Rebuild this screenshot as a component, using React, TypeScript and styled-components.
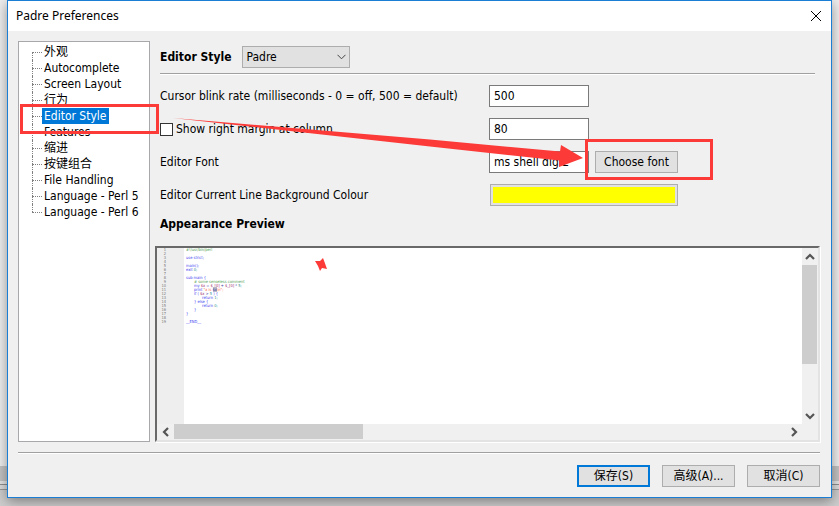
import React, { useState } from 'react';
import styled, { createGlobalStyle, css } from 'styled-components';

const GlobalStyle = createGlobalStyle`
  *, *::before, *::after { box-sizing: border-box; }
  body { margin: 0; background: #c8c8c8; color: #000; }
  body, button, input, select {
    font-family: "DejaVu Sans Condensed", "Noto Sans CJK SC", sans-serif;
    font-size: 12px;
    line-height: 16px;
  }
`;

const Desktop = styled.div`
  position: relative;
  display: flow-root;
  min-height: 100vh;
  overflow: hidden;
  background: linear-gradient(
    #eeeeee 0 466px, #c3c3c3 466px 481px, #e4e4e4 481px 484px,
    #8f8f8f 484px 485px, #dcdcdc 485px 489px, #999999 489px 490px, #cdcdcd 490px
  );
`;

const Dialog = styled.section`
  margin: 0 7px 7px;
  border: 1px solid #1a7fd4;
  background: #f0f0f0;
  box-shadow: 0 3px 12px rgba(0, 0, 0, 0.4);
`;

const TitleBar = styled.header`
  display: flex;
  align-items: center;
  justify-content: space-between;
  height: 30px;
  padding: 0 10px 0 8px;
  background: #fff;
`;

const Title = styled.h1`
  margin: 0;
  font-family: "Noto Sans", sans-serif;
  font-size: 12px;
  font-weight: 400;
`;

const CloseButton = styled.button`
  display: flex;
  padding: 0;
  border: 0;
  background: none;
`;

const Content = styled.div`
  display: flex;
  gap: 5px;
  padding: 10px 11px 10px 10px;
`;

const Tree = styled.ul`
  flex: 0 0 132px;
  margin: 0;
  padding: 2px 0 0 13px;
  border: 1px solid #a8a8ac;
  background: #fff;
  list-style: none;
`;

const TreeItem = styled.li`
  position: relative;
  display: flex;
  align-items: center;
  height: 16px;

  &::before {
    content: '';
    width: 10px;
    border-top: 1px dotted #808080;
  }
  &::after {
    content: '';
    position: absolute;
    left: 0;
    top: 0;
    height: 16px;
    border-left: 1px dotted #808080;
  }
  &:first-child::after { top: 8px; height: 8px; }
  &:last-child::after { height: 8px; }
`;

const TreeLabel = styled.button<{ $selected: boolean }>`
  padding: 0 2px;
  border: 0;
  background: none;
  color: #000;
  height: 16px;
  white-space: nowrap;
  ${(p) => p.$selected && css`
    background: #0078d7;
    color: #fff;
  `}
`;

const Panel = styled.main`
  flex: 1;
  min-width: 0;
`;

const StyleRow = styled.div`
  display: flex;
  align-items: center;
  gap: 11px;
  margin: 0 5px;
  padding: 5px 0;
`;

const StrongLabel = styled.label`
  font-weight: 700;
`;

const SelectBox = styled.div`
  display: grid;
  align-items: center;
  width: 108px;

  > * { grid-area: 1 / 1; }
  > svg { justify-self: end; margin-right: 4px; pointer-events: none; }
`;

const Select = styled.select`
  width: 100%;
  height: 22px;
  padding: 0 3px;
  border: 1px solid #adadad;
  border-radius: 0;
  background: #e1e1e1;
  color: #000;
  appearance: none;
`;

const Rule = styled.hr`
  height: 2px;
  margin: 0 5px;
  border: 0;
  border-top: 1px solid #a0a0a0;
  border-bottom: 1px solid #fff;
`;

const Settings = styled.div`
  display: grid;
  grid-template-columns: 319px auto 1fr;
  grid-template-rows: 22px 22px 22px 22px;
  row-gap: 11px;
  column-gap: 10px;
  align-items: center;
  padding: 10px 5px;
`;

const CheckLabel = styled.label`
  display: flex;
  align-items: center;
  gap: 3px;
`;

const Checkbox = styled.input`
  width: 13px;
  height: 13px;
  margin: 0;
  border: 1px solid #333;
  background: #fff;
  appearance: none;
  &:checked { background: #0078d7; }
`;

const TextInput = styled.input`
  width: 100px;
  height: 22px;
  padding: 0 4px;
  border: 1px solid #7a7a7a;
  border-radius: 0;
  background: #fff;
  color: #000;
`;

const Button = styled.button<{ $primary?: boolean; $width: number }>`
  width: ${(p) => p.$width}px;
  height: 22px;
  padding: 0;
  border: ${(p) => (p.$primary ? '2px solid #0078d7' : '1px solid #adadad')};
  background: #e1e1e1;
  color: #000;
`;

const FontButton = styled(Button)`
  margin-left: -4px;
`;

const ColourButton = styled.button`
  grid-column: 2 / 4;
  width: 188px;
  height: 22px;
  margin-left: 1px;
  border: 1px solid #adadad;
  padding: 2px;
  background: #e1e1e1;
`;

const ColourFill = styled.span`
  display: block;
  height: 16px;
  background: #ffff00;
`;

const SectionTitle = styled.h2`
  margin: 0 5px 14px;
  font-size: 12px;
  line-height: 16px;
  font-weight: 700;
`;

const Preview = styled.div`
  display: grid;
  grid-template-columns: 1fr 16px;
  grid-template-rows: 176px 16px;
  border: 2px solid;
  border-color: #696969 #e3e3e3 #e3e3e3 #696969;
  box-shadow: 1px 1px 0 #fff;
  background: #f0f0f0;
`;

const Editor = styled.div`
  display: flex;
  overflow: hidden;
  background: #fff;
  font-family: "DejaVu Sans Condensed", sans-serif;
  font-size: 4px;
  line-height: 4px;
`;

const Gutter = styled.ol`
  width: 27px;
  margin: 0;
  padding: 0 18px 0 0;
  background: #eee;
  color: #777;
  list-style: none;
  text-align: right;
`;

const Code = styled.pre`
  margin: 0;
  padding: 0 0 0 2px;
  font-family: inherit;
`;

const CodeLine = styled.div<{ $indent: number }>`
  height: 4px;
  padding-left: ${(p) => p.$indent * 8}px;
`;

const tones = {
  comment: '#4fa04f',
  keyword: '#3c3cf0',
  scalar: '#a03070',
  string: '#ff6040',
  number: '#309090',
  plain: '#4040a0',
};
type Tone = keyof typeof tones;

const Token = styled.span<{ $tone: Tone; $marked?: boolean }>`
  color: ${(p) => tones[p.$tone]};
  background: ${(p) => (p.$marked ? '#b8b8c8' : 'transparent')};
`;

const VScroll = styled.div`
  display: flex;
  flex-direction: column;
  width: 15px;
`;

const HScroll = styled.div`
  display: flex;
  height: 15px;
`;

const ScrollButton = styled.button`
  display: flex;
  align-items: center;
  justify-content: center;
  flex: 0 0 17px;
  min-height: 15px;
  padding: 0;
  border: 0;
  background: #f0f0f0;
`;

const Track = styled.div`
  display: flex;
  flex: 1;
`;

const VThumb = styled.div`
  width: 15px;
  height: 70%;
  background: #cdcdcd;
`;

const HThumb = styled.div`
  width: 31%;
  background: #cdcdcd;
`;

const Footer = styled.footer`
  padding: 0 11px 10px 10px;
`;

const FooterRule = styled(Rule)`
  margin: 0;
`;

const Actions = styled.div`
  display: flex;
  justify-content: flex-end;
  gap: 12px;
  padding-top: 11px;
`;

const Annotation = styled.svg`
  position: absolute;
  left: 0;
  top: 0;
  width: 839px;
  height: 506px;
  pointer-events: none;
`;

type Direction = 'up' | 'down' | 'left' | 'right';
const arrowPoints: Record<Direction, string> = {
  up: '2,8 6,4 10,8',
  down: '2,4 6,8 10,4',
  left: '8,2 4,6 8,10',
  right: '4,2 8,6 4,10',
};

const ScrollArrow = ({ to }: { to: Direction }) => (
  <svg width="12" height="12" viewBox="0 0 12 12" fill="none" stroke="#555" strokeWidth="2.2" aria-hidden="true">
    <polyline points={arrowPoints[to]} />
  </svg>
);

const pages = [
  '外观', 'Autocomplete', 'Screen Layout', '行为', 'Editor Style', 'Features',
  '缩进', '按键组合', 'File Handling', 'Language - Perl 5', 'Language - Perl 6',
];

type Piece = [string, Tone, boolean?];
const source: { indent: number; pieces: Piece[] }[] = [
  { indent: 0, pieces: [['#!/usr/bin/perl', 'comment']] },
  { indent: 0, pieces: [] },
  { indent: 0, pieces: [['use strict;', 'keyword']] },
  { indent: 0, pieces: [] },
  { indent: 0, pieces: [['main();', 'keyword']] },
  { indent: 0, pieces: [['exit ', 'keyword'], ['0;', 'number']] },
  { indent: 0, pieces: [] },
  { indent: 0, pieces: [['sub main {', 'keyword']] },
  { indent: 1, pieces: [['# some senseless comment', 'comment']] },
  { indent: 1, pieces: [['my ', 'keyword'], ['$x', 'scalar'], [' = ', 'plain'], ['$_[0]', 'scalar'], [' + ', 'plain'], ['$_[0]', 'scalar'], [' * ', 'plain'], ['5;', 'number']] },
  { indent: 1, pieces: [['print ', 'keyword'], ['"x is ', 'string'], ['$x', 'plain', true], ['\\n";', 'string']] },
  { indent: 1, pieces: [['if ( ', 'keyword'], ['$x', 'scalar'], [' > ', 'plain'], ['5', 'number'], [' ) {', 'keyword']] },
  { indent: 2, pieces: [['return ', 'keyword'], ['1;', 'number']] },
  { indent: 1, pieces: [['} else {', 'keyword']] },
  { indent: 2, pieces: [['return ', 'keyword'], ['0;', 'number']] },
  { indent: 1, pieces: [['}', 'keyword']] },
  { indent: 0, pieces: [['}', 'keyword']] },
  { indent: 0, pieces: [] },
  { indent: 0, pieces: [['__END__', 'keyword']] },
];

export default function App() {
  const [page, setPage] = useState('Editor Style');
  return (
    <Desktop>
      <GlobalStyle />
      <Dialog aria-label="Padre Preferences">
        <TitleBar>
          <Title>Padre Preferences</Title>
          <CloseButton aria-label="Close">
            <svg width="10" height="10" viewBox="0 0 10 10" stroke="#000" fill="none" aria-hidden="true">
              <path d="M0 0L10 10M10 0L0 10" />
            </svg>
          </CloseButton>
        </TitleBar>
        <Content>
          <Tree>
            {pages.map((name) => (
              <TreeItem key={name}>
                <TreeLabel $selected={name === page} onClick={() => setPage(name)}>{name}</TreeLabel>
              </TreeItem>
            ))}
          </Tree>
          <Panel>
            <StyleRow>
              <StrongLabel htmlFor="style">Editor Style</StrongLabel>
              <SelectBox>
                <Select id="style" defaultValue="Padre"><option>Padre</option></Select>
                <svg width="9" height="6" viewBox="0 0 9 6" fill="none" stroke="#444" aria-hidden="true">
                  <path d="M0.5 0.8L4.5 4.8L8.5 0.8" />
                </svg>
              </SelectBox>
            </StyleRow>
            <Rule />
            <Settings>
              <label htmlFor="blink">Cursor blink rate (milliseconds - 0 = off, 500 = default)</label>
              <TextInput id="blink" defaultValue="500" />
              <span />
              <CheckLabel><Checkbox type="checkbox" />Show right margin at column</CheckLabel>
              <TextInput aria-label="Right margin column" defaultValue="80" />
              <span />
              <label htmlFor="font">Editor Font</label>
              <TextInput id="font" defaultValue="ms shell dlg 2" />
              <FontButton $width={83}>Choose font</FontButton>
              <label htmlFor="colour">Editor Current Line Background Colour</label>
              <ColourButton id="colour"><ColourFill /></ColourButton>
            </Settings>
            <SectionTitle>Appearance Preview</SectionTitle>
            <Preview>
              <Editor>
                <Gutter>{source.map((_, i) => <li key={i}>{i + 1}</li>)}</Gutter>
                <Code>
                  {source.map((line, i) => (
                    <CodeLine key={i} $indent={line.indent}>
                      {line.pieces.map(([text, tone, marked], j) => (
                        <Token key={j} $tone={tone} $marked={marked}>{text}</Token>
                      ))}
                    </CodeLine>
                  ))}
                </Code>
              </Editor>
              <VScroll>
                <ScrollButton aria-label="Scroll up"><ScrollArrow to="up" /></ScrollButton>
                <Track><VThumb /></Track>
                <ScrollButton aria-label="Scroll down"><ScrollArrow to="down" /></ScrollButton>
              </VScroll>
              <HScroll>
                <ScrollButton aria-label="Scroll left"><ScrollArrow to="left" /></ScrollButton>
                <Track><HThumb /></Track>
                <ScrollButton aria-label="Scroll right"><ScrollArrow to="right" /></ScrollButton>
              </HScroll>
            </Preview>
          </Panel>
        </Content>
        <Footer>
          <FooterRule />
          <Actions>
            <Button $width={73} $primary>保存(S)</Button>
            <Button $width={73}>高级(A)...</Button>
            <Button $width={73}>取消(C)</Button>
          </Actions>
        </Footer>
      </Dialog>
      <Annotation viewBox="0 0 839 506" fill="#fc3a38" aria-hidden="true">
        <rect x="21.5" y="105.5" width="136" height="27" fill="none" stroke="#fc3a38" strokeWidth="3" />
        <rect x="586.5" y="140.5" width="125" height="38" fill="none" stroke="#fc3a38" strokeWidth="3" />
        <path d="M173 118L430 139.5L560 151.5L561 145L583 158L559 167L559 160.5L430 146.5Z" />
        <path d="M315 261L320 261L323 258L324.5 262L327 269L322 268L320 271L318 266Z" />
      </Annotation>
    </Desktop>
  );
}
